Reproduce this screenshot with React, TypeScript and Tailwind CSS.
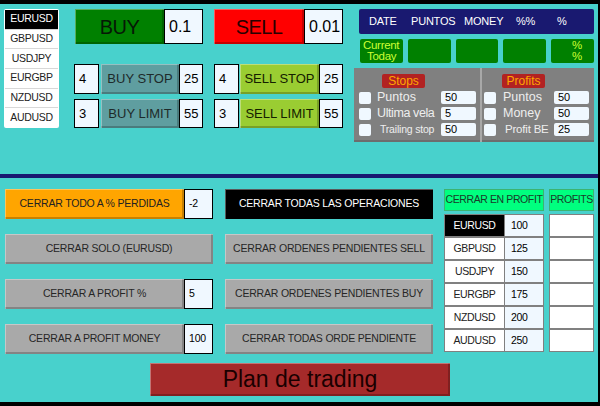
import type { ReactNode } from 'react';
import clsx from 'clsx';

const bevel =
  'shadow-[inset_1px_1px_0_rgba(255,255,255,0.35),inset_-2px_-2px_0_rgba(0,0,0,0.22)]';

const symbols = ['EURUSD', 'GBPUSD', 'USDJPY', 'EURGBP', 'NZDUSD', 'AUDUSD'];
const profitRows = [
  { s: 'EURUSD', v: '100' },
  { s: 'GBPUSD', v: '125' },
  { s: 'USDJPY', v: '150' },
  { s: 'EURGBP', v: '175' },
  { s: 'NZDUSD', v: '200' },
  { s: 'AUDUSD', v: '250' },
];

function Box({ className, children }: { className?: string; children: ReactNode }) {
  return (
    <div className={clsx('bg-[#f0f8ff] border border-black flex items-center pl-[4px] text-black', className)}>
      {children}
    </div>
  );
}

function Btn({ className, children }: { className?: string; children: ReactNode }) {
  return (
    <div className={clsx('flex items-center justify-center', bevel, className)}>{children}</div>
  );
}

function OptRow({ label, value, labelClass, inputClass }: { label: string; value: string; labelClass: string; inputClass: string }) {
  return (
    <div className="flex items-center h-[13px]">
      <div className="w-[12px] h-[12px] bg-[#f0f8ff] rounded-[2px]" />
      <span className={clsx('text-[#eeeeee] leading-none whitespace-nowrap', labelClass)}>{label}</span>
      <div className={clsx('h-[13px] bg-[#f0f8ff] rounded-[2px] text-black text-[11px] leading-[13px] pl-[4px]', inputClass)}>
        {value}
      </div>
    </div>
  );
}

export default function App() {
  return (
    <div className="w-[600px] h-[406px] bg-black pt-[4px] pb-[4px] pr-[2px] flex flex-col font-['Liberation_Sans',Arial,sans-serif]">
      {/* top panel */}
      <div className="h-[170px] bg-[#48d1cc] flex pl-[4px] pt-[5px]">
        {/* symbol list */}
        <div className="w-[55px] h-[119px] bg-white rounded-[2px] p-[1px] flex flex-col">
          {symbols.map((s, i) => (
            <div
              key={s}
              className={clsx(
                'flex-1 flex items-center justify-center text-[10.5px] tracking-[-0.3px]',
                i === 0 ? 'bg-black text-white' : 'text-[#222] border-t border-[#d8d8d8]'
              )}
            >
              {s}
            </div>
          ))}
        </div>

        {/* order buttons */}
        <div className="ml-[16px] w-[269px] flex flex-col">
          <div className="flex h-[35px]">
            <Btn className="w-[89px] bg-[#008000] text-[#061806] text-[20px] tracking-[-0.6px]">BUY</Btn>
            <Box className="w-[39px] text-[16px]">0.1</Box>
            <Btn className="ml-[11px] w-[90px] bg-[#ff0000] text-[#2a0000] text-[20px] tracking-[-0.6px]">SELL</Btn>
            <Box className="w-[39px] text-[16px]">0.01</Box>
          </div>
          <div className="flex h-[30px] mt-[20px] -ml-[1px] text-[13px]">
            <Box className="w-[25px]">4</Box>
            <Btn className="ml-[2px] w-[78px] bg-[#5f9ea0] text-[#1e2a2a]">BUY STOP</Btn>
            <Box className="w-[24px]">25</Box>
            <Box className="ml-[11px] w-[25px]">4</Box>
            <Btn className="ml-[1px] w-[79px] bg-[#9acd32] text-[#142000]">SELL STOP</Btn>
            <Box className="w-[24px]">25</Box>
          </div>
          <div className="flex h-[29px] mt-[5px] -ml-[1px] text-[13px]">
            <Box className="w-[25px]">3</Box>
            <Btn className="ml-[2px] w-[78px] bg-[#5f9ea0] text-[#1e2a2a]">BUY LIMIT</Btn>
            <Box className="w-[24px]">55</Box>
            <Box className="ml-[11px] w-[25px]">3</Box>
            <Btn className="ml-[1px] w-[79px] bg-[#9acd32] text-[#142000]">SELL LIMIT</Btn>
            <Box className="w-[24px]">55</Box>
          </div>
        </div>

        {/* stats */}
        <div className="ml-[10px] w-[240px] flex flex-col">
          <div className="ml-[5px] h-[25px] bg-[#191970] rounded-[2px] flex items-center pl-[10px] text-white text-[11px] tracking-[-0.2px]">
            <span className="w-[42px]">DATE</span>
            <span className="w-[53px]">PUNTOS</span>
            <span className="w-[52px]">MONEY</span>
            <span className="w-[41px]">%%</span>
            <span>%</span>
          </div>
          <div className="ml-[6px] mt-[5px] h-[24px] flex gap-[5px] text-[#ccff33] text-[11.5px] tracking-[-0.3px] leading-[11px]">
            <div className="w-[43px] bg-[#008000] rounded-[2px] flex flex-col justify-center pl-[3px]">
              <span>Current</span>
              <span className="pl-[4px]">Today</span>
            </div>
            <div className="w-[43px] bg-[#008000] rounded-[2px]" />
            <div className="w-[43px] bg-[#008000] rounded-[2px]" />
            <div className="w-[43px] bg-[#008000] rounded-[2px]" />
            <div className="w-[43px] bg-[#008000] rounded-[2px] flex flex-col justify-center items-end pr-[12px]">
              <span>%</span>
              <span>%</span>
            </div>
          </div>
          <div className="mt-[5px] h-[74px] bg-[#808080] flex shadow-[inset_0_-2px_0_rgba(0,0,0,0.15)]">
            <div className="w-[126px] pl-[5px] pt-[6px] flex flex-col">
              <div className="ml-[23px] w-[43px] h-[14px] bg-[#b22222] rounded-[2px] text-[#ffa500] text-[12px] flex items-center justify-center">
                Stops
              </div>
              <div className="mt-[3px] flex flex-col gap-[3px]">
                <OptRow label="Puntos" value="50" labelClass="ml-[6px] w-[64px] text-[12.5px]" inputClass="w-[35px]" />
                <OptRow label="Ultima vela" value="5" labelClass="ml-[6px] w-[64px] text-[12.5px] tracking-[-0.4px]" inputClass="w-[35px]" />
                <OptRow label="Trailing stop" value="50" labelClass="ml-[9px] w-[61px] text-[10.5px] tracking-[-0.2px]" inputClass="w-[35px]" />
              </div>
            </div>
            <div className="w-[2px] bg-[#a8a8a8]" />
            <div className="flex-1 pl-[2px] pt-[6px] flex flex-col">
              <div className="ml-[18px] w-[43px] h-[14px] bg-[#b22222] rounded-[2px] text-[#ffa500] text-[12px] flex items-center justify-center">
                Profits
              </div>
              <div className="mt-[3px] flex flex-col gap-[3px]">
                <OptRow label="Puntos" value="50" labelClass="ml-[7px] w-[51px] text-[12.5px]" inputClass="w-[35px]" />
                <OptRow label="Money" value="50" labelClass="ml-[7px] w-[51px] text-[12.5px]" inputClass="w-[35px]" />
                <OptRow label="Profit BE" value="25" labelClass="ml-[9px] w-[49px] text-[11.5px] tracking-[-0.2px]" inputClass="w-[35px]" />
              </div>
            </div>
          </div>
        </div>
      </div>

      <div className="h-[4px] bg-[#191970]" />

      {/* bottom panel */}
      <div className="flex-1 bg-[#48d1cc] pl-[5px] pt-[11px] flex flex-col">
        <div className="flex">
          <div className="w-[208px] flex flex-col gap-[15px] text-[10.5px] tracking-[-0.2px]">
            <div className="flex h-[30px]">
              <Btn className="w-[179px] bg-[#ffa500] text-[#222]">CERRAR TODO A % PERDIDAS</Btn>
              <Box className="flex-1">-2</Box>
            </div>
            <Btn className="h-[30px] bg-[#a9a9a9] text-[#262626]">CERRAR SOLO (EURUSD)</Btn>
            <div className="flex h-[30px]">
              <Btn className="w-[179px] bg-[#a9a9a9] text-[#262626]">CERRAR A PROFIT %</Btn>
              <Box className="flex-1">5</Box>
            </div>
            <div className="flex h-[30px]">
              <Btn className="w-[179px] bg-[#a9a9a9] text-[#262626]">CERRAR A PROFIT MONEY</Btn>
              <Box className="flex-1">100</Box>
            </div>
          </div>

          <div className="ml-[12px] w-[208px] flex flex-col gap-[15px] text-[10.5px] tracking-[-0.2px]">
            <Btn className="h-[30px] bg-black text-white">CERRAR TODAS LAS OPERACIONES</Btn>
            <Btn className="h-[30px] bg-[#a9a9a9] text-[#262626]">CERRAR ORDENES PENDIENTES SELL</Btn>
            <Btn className="h-[30px] bg-[#a9a9a9] text-[#262626]">CERRAR ORDENES PENDIENTES BUY</Btn>
            <Btn className="h-[30px] bg-[#a9a9a9] text-[#262626]">CERRAR TODAS ORDE PENDIENTE</Btn>
          </div>

          <div className="ml-[11px] flex gap-[5px] text-[10.5px] tracking-[-0.4px]">
            <div className="w-[100px] flex flex-col">
              <div className="h-[22px] bg-[#00ff7f] border border-[#3cb371] flex items-center justify-center text-[#1a3a2a] whitespace-nowrap">
                CERRAR EN PROFIT
              </div>
              <div className="mt-[3px] bg-[#808080] p-[1px] flex flex-col gap-[2px]">
                {profitRows.map((r, i) => (
                  <div key={r.s} className="flex h-[21px] gap-[1px]">
                    <div
                      className={clsx(
                        'w-[59px] flex items-center justify-center',
                        i === 0 ? 'bg-black text-white' : 'bg-white text-[#222]'
                      )}
                    >
                      {r.s}
                    </div>
                    <div className="flex-1 bg-[#f0f8ff] flex items-center pl-[6px] text-black">{r.v}</div>
                  </div>
                ))}
              </div>
            </div>
            <div className="w-[45px] flex flex-col">
              <div className="h-[22px] bg-[#00ff7f] border border-[#3cb371] flex items-center justify-center text-[#1a3a2a]">
                PROFITS
              </div>
              <div className="mt-[3px] bg-[#808080] p-[1px] flex flex-col gap-[2px]">
                {profitRows.map(r => (
                  <div key={r.s} className="h-[21px] bg-white" />
                ))}
              </div>
            </div>
          </div>
        </div>

        <Btn className="mt-[9px] ml-[145px] w-[300px] h-[33px] bg-[#a52a2a] text-[#1a0000] text-[23px]">
          Plan de trading
        </Btn>
      </div>
    </div>
  );
}
